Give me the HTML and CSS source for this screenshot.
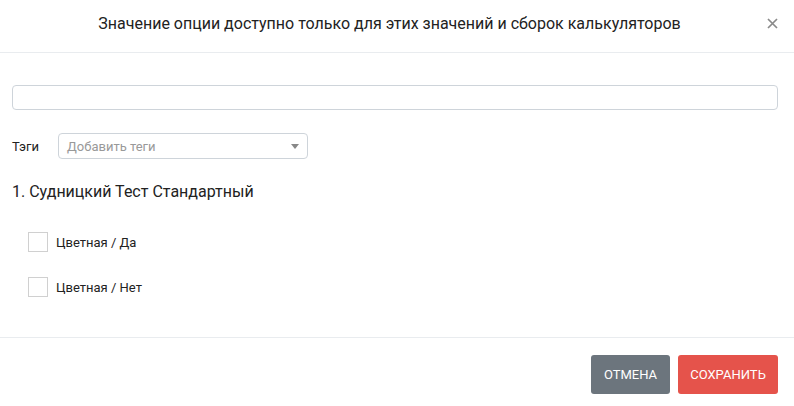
FILE: index.html
```html
<!DOCTYPE html>
<html lang="ru">
<head>
<meta charset="utf-8">
<link rel="stylesheet" href="styles.css">
</head>
<body>
<div class="modal">
  <div class="modal-header">
    <div class="modal-title">Значение опции доступно только для этих значений и сборок калькуляторов</div>
    <button class="close" type="button">
      <svg width="11" height="11" viewBox="0 0 11 11"><path d="M1 1L10 10M10 1L1 10" stroke="#8a8a8a" stroke-width="1.7"/></svg>
    </button>
  </div>
  <div class="modal-body">
    <input class="text-input" type="text">
    <div class="tags-row">
      <span class="tags-label">Тэги</span>
      <div class="select">
        <span class="placeholder">Добавить теги</span>
        <span class="caret"></span>
      </div>
    </div>
    <div class="calc-title">1. Судницкий Тест Стандартный</div>
    <div class="options">
      <label class="option"><span class="box"></span><span>Цветная / Да</span></label>
      <label class="option"><span class="box"></span><span>Цветная / Нет</span></label>
    </div>
  </div>
  <div class="modal-footer">
    <button class="btn btn-cancel" type="button">Отмена</button>
    <button class="btn btn-save" type="button">Сохранить</button>
  </div>
</div>
</body>
</html>
```
FILE: styles.css
```css
* { box-sizing: border-box; }
html, body { margin: 0; padding: 0; background: #fff; }
body { font-family: Roboto, "Noto Sans", sans-serif; color: #222; width: 794px; height: 406px; overflow: hidden; }

.modal { display: flex; flex-direction: column; height: 406px; }

.modal-header {
  height: 53px;
  display: flex;
  align-items: center;
  padding: 0 16px 0 16px;
  border-bottom: 1px solid #e9ecef;
}
.modal-title { flex: 1; text-align: center; font-size: 16px; color: #222; padding-bottom: 5px; }
.close {
  width: 18px; height: 18px; padding: 0; border: 0; background: none;
  display: flex; align-items: center; justify-content: center; margin: 0 -3px 5px 0;
}

.modal-body { padding: 32px 16px 0 12px; height: 284px; }
.text-input {
  display: block; width: 766px; height: 25px;
  border: 1px solid #ced4da; border-radius: 4px; outline: none; padding: 0 8px;
}
.tags-row { display: flex; align-items: center; margin-top: 23px; }
.tags-label { font-size: 13px; width: 46px; color: #222; }
.select {
  width: 250px; height: 26px; border: 1px solid #ced4da; border-radius: 4px;
  display: flex; align-items: center; justify-content: space-between; padding: 0 8px 0 8px;
}
.placeholder { font-size: 13px; color: #999; }
.caret { width: 0; height: 0; border-left: 4px solid transparent; border-right: 4px solid transparent; border-top: 5px solid #888; }

.calc-title { font-size: 16px; color: #222; margin-top: 23px; line-height: 20px; }
.options { padding-left: 16px; margin-top: 30px; display: flex; flex-direction: column; gap: 25px; }
.option { display: flex; align-items: center; font-size: 13px; color: #222; }
.box { width: 20px; height: 20px; border: 1px solid #d0d0d0; margin-right: 8px; background: #fff; }

.modal-footer {
  border-top: 1px solid #e9ecef;
  display: flex; justify-content: flex-end; gap: 8px;
  padding: 17px 16px 0 0;
  flex: 1;
}
.btn {
  height: 39px; border: 0; border-radius: 3px; color: #fff;
  font-family: Roboto, "Noto Sans", sans-serif; font-size: 13px; text-transform: uppercase;
  padding: 0;
}
.btn-cancel { background: #6c757d; width: 79px; }
.btn-save { background: #e5534b; width: 100px; }
```
